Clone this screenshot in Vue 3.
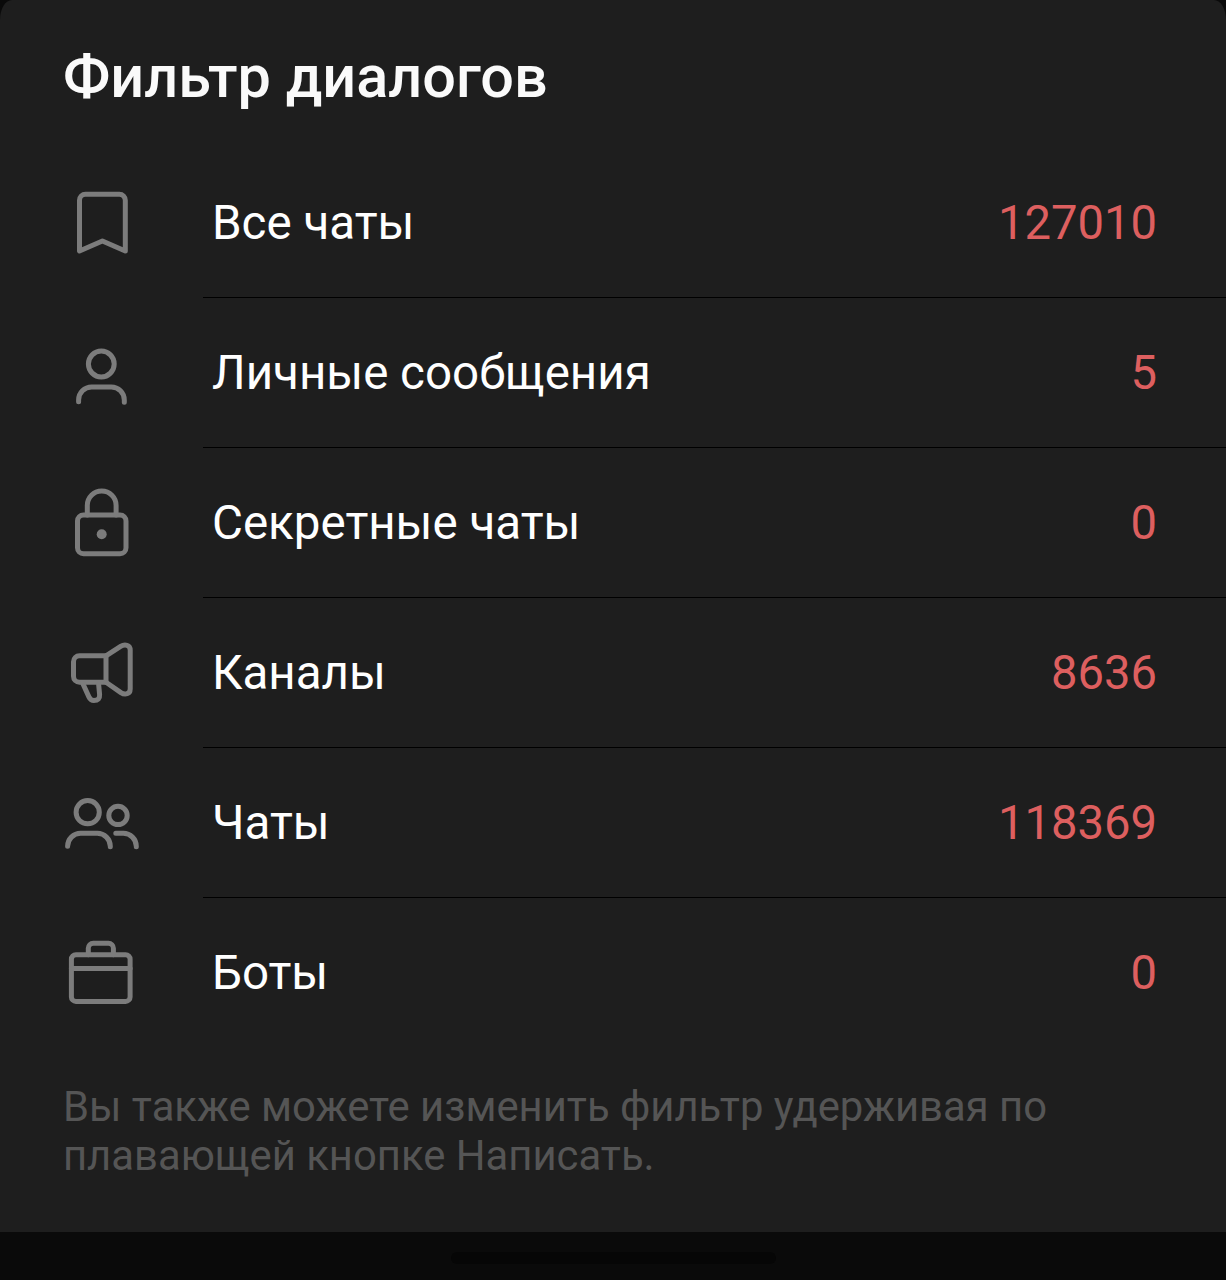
<template>
	<div class="screen">
		<div class="sheet">
			<h1 class="title">Фильтр диалогов</h1>
			<ul class="list">
				<li class="item" v-for="item in filters" :key="item.title" @click="selected = item.icon">
					<svg class="icon" viewBox="0 0 80 80">
						<template v-if="item.icon === 'bookmark'">
							<path d="M17.5 68V17.3a6 6 0 0 1 6-6h33.8a6 6 0 0 1 6 6V68L40.4 58z" />
						</template>
						<template v-else-if="item.icon === 'user'">
							<circle cx="39.3" cy="31" r="12.9" />
							<path d="M16.6 68.8V67a13 13 0 0 1 13-13h19.7a13 13 0 0 1 13 13v2.2" />
						</template>
						<template v-else-if="item.icon === 'lock'">
							<rect x="15.5" y="32" width="48.5" height="38.7" rx="6" />
							<path d="M25.3 32v-9.5a14.4 14.4 0 0 1 28.8 0V32" />
							<circle class="dot" cx="39.7" cy="51.3" r="5" />
						</template>
						<template v-else-if="item.icon === 'channel'">
							<path d="M44 22.7H17.5a6 6 0 0 0-6 6v14.6a6 6 0 0 0 6 6H44z" />
							<path d="M44 22.9l14.6-9.5C62.8 10.7 68.2 11.9 68.2 17v38.9c0 5.2-5.1 6.4-9.3 3.7L44 49.3" />
							<path d="M20.8 50.5l6.1 13.4c1.2 2.6 2.6 3.7 5 3.7 4.1 0 6-2.1 5.7-6.2l-.9-9.4" />
						</template>
						<template v-else-if="item.icon === 'group'">
							<circle cx="25.7" cy="29.2" r="11.6" />
							<circle cx="56" cy="32.4" r="9.2" />
							<path d="M5.6 63.3a13 13 0 0 1 13-13h16.7a13 13 0 0 1 13 13v.5" />
							<path d="M53.8 50.3h7.5a13 13 0 0 1 13 13v.5" />
						</template>
						<template v-else>
							<rect x="9.4" y="21.7" width="58.7" height="46.7" rx="4.5" />
							<path d="M9.4 35.6h58.7M26.3 21.7v-6.4a5 5 0 0 1 5-5h15.1a5 5 0 0 1 5 5v6.4" />
						</template>
					</svg>
					<div class="content">
						<span class="label">{{ item.title }}</span>
						<span class="count">{{ item.count }}</span>
					</div>
				</li>
			</ul>
			<p class="hint">Вы также можете изменить фильтр удерживая по плавающей кнопке Написать.</p>
		</div>
		<div class="navbar">
			<div class="handle"></div>
		</div>
	</div>
</template>

<script setup>
import { ref } from "vue";

const selected = ref("bookmark");

const filters = ref([
	{ icon: "bookmark", title: "Все чаты", count: 127010 },
	{ icon: "user", title: "Личные сообщения", count: 5 },
	{ icon: "lock", title: "Секретные чаты", count: 0 },
	{ icon: "channel", title: "Каналы", count: 8636 },
	{ icon: "group", title: "Чаты", count: 118369 },
	{ icon: "bot", title: "Боты", count: 0 },
]);
</script>

<style>
body {
	background: #0a0a0a;
}
</style>

<style scoped>
.screen {
	display: flex;
	flex-direction: column;
	height: 1280px;
	background: #0a0a0a;
	font-family: Roboto, sans-serif;
	overflow: hidden;
}

.sheet {
	box-sizing: border-box;
	height: 1232px;
	padding-top: 42px;
	background: #1e1e1e;
	border-radius: 12px 12px 0 0 / 20px 20px 0 0;
}

.title {
	margin: 0 0 36px 63px;
	font-size: 59.4px;
	font-weight: 500;
	line-height: 70px;
	color: #fafafa;
}

.list {
	margin: 0;
	padding: 0;
	list-style: none;
}

.item {
	display: flex;
	align-items: center;
	height: 150px;
	padding-left: 62px;
	cursor: pointer;
}

.icon {
	flex: none;
	width: 80px;
	height: 80px;
	margin-right: 61px;
	fill: none;
	stroke: #7c7c7c;
	stroke-width: 5;
	stroke-linecap: round;
	stroke-linejoin: round;
}

.dot {
	fill: #7c7c7c;
	stroke: none;
}

.content {
	flex: 1;
	display: flex;
	align-items: center;
	justify-content: space-between;
	box-sizing: border-box;
	height: 150px;
	padding: 0 69px 0 9px;
	border-bottom: 1px solid #000;
	font-size: 47.5px;
	color: #fff;
}

.item:last-child .content {
	border-bottom-color: transparent;
}

.count {
	font-size: 47.2px;
	color: #dd5f5f;
}

.hint {
	margin: 34px 100px 0 63px;
	font-size: 41.8px;
	line-height: 49px;
	color: #555;
}

.navbar {
	display: flex;
	justify-content: center;
	height: 48px;
	padding-top: 20px;
	box-sizing: border-box;
}

.handle {
	width: 325px;
	height: 12px;
	border-radius: 6px;
	background: #060606;
}
</style>
